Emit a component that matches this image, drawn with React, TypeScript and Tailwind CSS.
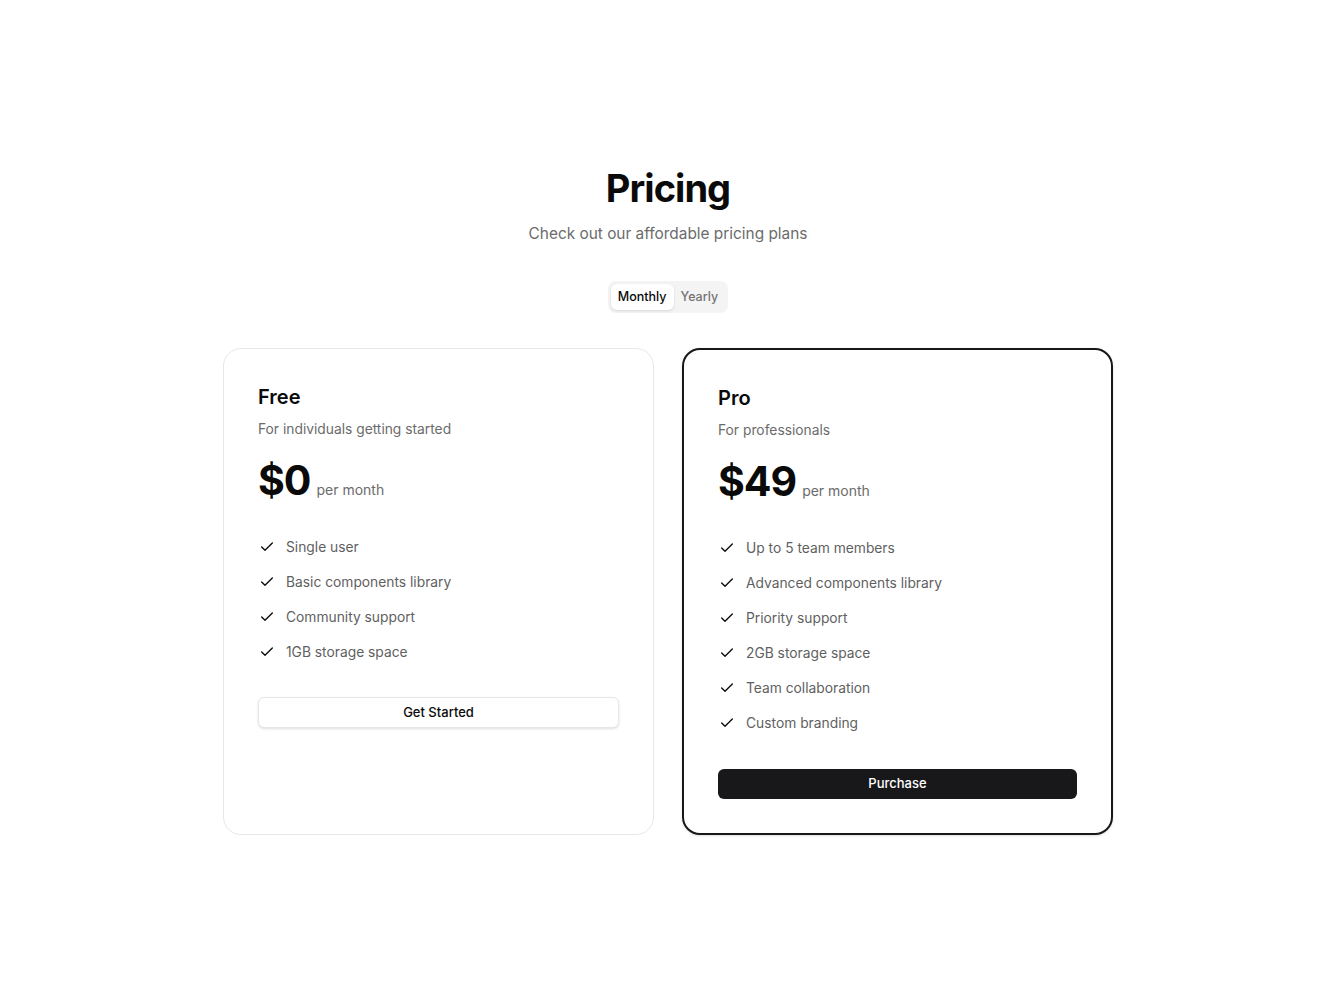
import { Check } from "lucide-react";

const plans = [
  {
    name: "Free",
    desc: "For individuals getting started",
    price: "$0",
    features: ["Single user", "Basic components library", "Community support", "1GB storage space"],
    cta: "Get Started",
    featured: false,
  },
  {
    name: "Pro",
    desc: "For professionals",
    price: "$49",
    features: [
      "Up to 5 team members",
      "Advanced components library",
      "Priority support",
      "2GB storage space",
      "Team collaboration",
      "Custom branding",
    ],
    cta: "Purchase",
    featured: true,
  },
];

export default function App() {
  return (
    <div className="min-h-screen bg-white font-['Inter',sans-serif] text-[#0a0a0a] pt-[166px]">
      <div className="flex flex-col items-center">
        <h1 className="text-[38px] leading-[44px] font-bold tracking-tight">Pricing</h1>
        <p className="mt-3 text-[15.4px] leading-6 text-[#6b6b6b]">Check out our affordable pricing plans</p>

        <div className="mt-[35px] flex h-8 items-center rounded-lg bg-[#f4f4f5] p-[3px]">
          <button className="h-[26px] rounded-md bg-white px-[7px] text-[12.5px] font-medium text-[#0a0a0a] shadow-sm">
            Monthly
          </button>
          <button className="h-[26px] rounded-md px-[7px] text-[12.5px] font-medium text-[#737373]">Yearly</button>
        </div>

        <div className="mt-[35px] grid w-[890px] grid-cols-2 gap-[28px]">
          {plans.map((p) => (
            <div
              key={p.name}
              className={
                p.featured
                  ? "flex flex-col rounded-[18px] border-2 border-[#18181b] bg-white p-[34px] shadow-sm"
                  : "flex flex-col rounded-[18px] border border-[#e7e7e7] bg-white p-[34px]"
              }
            >
              <h3 className="text-xl leading-7 font-semibold">{p.name}</h3>
              <p className="mt-2 text-[13.8px] leading-5 text-[#6b6b6b]">{p.desc}</p>
              <div className="mt-[21px] flex items-baseline gap-[6px]">
                <span className="text-[41px] leading-[40px] font-bold tracking-tight">{p.price}</span>
                <span className="text-sm text-[#6b6b6b]">per month</span>
              </div>
              <ul className="mt-[37px] flex flex-col gap-[15px]">
                {p.features.map((f) => (
                  <li key={f} className="flex items-center gap-[11px] text-[13.8px] leading-5 text-[#5f5f5f]">
                    <Check size={16} strokeWidth={2} className="ml-[1px] text-[#0a0a0a]" />
                    {f}
                  </li>
                ))}
              </ul>
              <button
                className={
                  p.featured
                    ? "mt-[36px] h-[30px] w-full rounded-md bg-[#18181b] text-[13px] font-medium text-white"
                    : "mt-[35px] h-[31px] w-full rounded-md border border-[#e7e7e7] bg-white text-[13px] font-medium text-[#0a0a0a] shadow-sm"
                }
              >
                {p.cta}
              </button>
            </div>
          ))}
        </div>
      </div>
    </div>
  );
}
